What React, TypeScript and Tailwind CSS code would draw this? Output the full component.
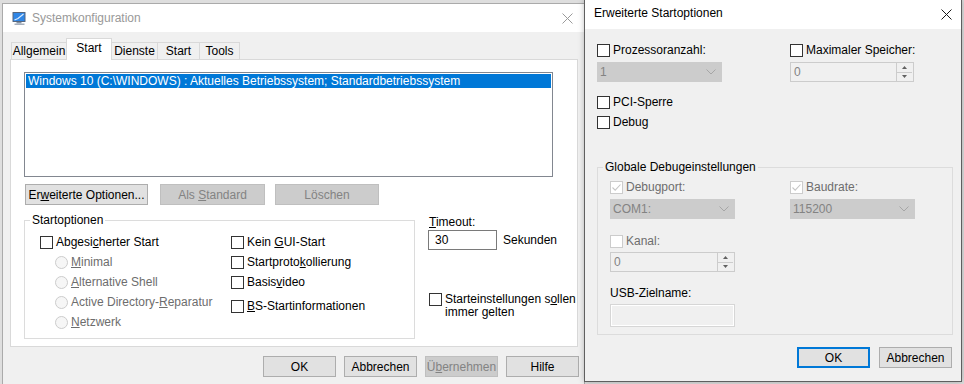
import type { ReactNode } from 'react';

function Box({ checked = false, disabled = false }: { checked?: boolean; disabled?: boolean }) {
  return (
    <span
      className={`w-[13px] h-[13px] shrink-0 border flex items-center justify-center ${
        disabled ? 'border-[#cccccc] bg-white' : 'border-[#333333] bg-white'
      }`}
    >
      {checked && (
        <svg width="11" height="11" viewBox="0 0 11 11">
          <path d="M1.5 5.5 L4.2 8.2 L9.5 2.5" fill="none" stroke="#c6c6c6" strokeWidth="1.1" />
        </svg>
      )}
    </span>
  );
}

function Check({ children, checked = false, disabled = false }: { children: ReactNode; checked?: boolean; disabled?: boolean }) {
  return (
    <div className="flex items-center h-[20px]">
      <Box checked={checked} disabled={disabled} />
      <span className={`ml-[3px] whitespace-nowrap ${disabled ? 'text-[#6d6d6d]' : 'text-black'}`}>{children}</span>
    </div>
  );
}

function Radio({ children }: { children: ReactNode }) {
  return (
    <div className="flex items-center h-[20px] pl-[15px]">
      <span className="w-[13px] h-[13px] shrink-0 rounded-full border border-[#cccccc] bg-[#f6f6f6]" />
      <span className="ml-[3px] whitespace-nowrap text-[#6d6d6d]">{children}</span>
    </div>
  );
}

function Btn({ children, className = '', disabled = false, primary = false }: { children: ReactNode; className?: string; disabled?: boolean; primary?: boolean }) {
  const look = disabled
    ? 'bg-[#cccccc] border border-[#bfbfbf] text-[#838383]'
    : primary
    ? 'bg-[#e1e1e1] border-2 border-[#0078d7] text-black'
    : 'bg-[#e1e1e1] border border-[#adadad] text-black';
  return <div className={`h-[21px] flex items-center justify-center shrink-0 ${look} ${className}`}>{children}</div>;
}

function Combo({ value }: { value: string }) {
  return (
    <div className="w-[125px] h-[20px] bg-[#cccccc] border border-[#cccccc] flex items-center pl-[2px] pr-[5px] text-[#838383]">
      <span>{value}</span>
      <svg className="ml-auto" width="10" height="6" viewBox="0 0 10 6">
        <path d="M0.5 0.5 L5 5 L9.5 0.5" fill="none" stroke="#a6a6a6" strokeWidth="1" />
      </svg>
    </div>
  );
}

function Spin({ value, w = 'w-[125px]' }: { value: string; w?: string }) {
  return (
    <div className={`${w} h-[20px] bg-[#f0f0f0] border border-[#cccccc] flex items-stretch text-[#838383]`}>
      <span className="flex-1 flex items-center pl-[3px]">{value}</span>
      <div className="w-[16px] flex flex-col border-l border-[#cccccc] mr-[1px]">
        <div className="flex-1 flex items-center justify-center border-b border-[#cccccc]">
          <svg width="5" height="3" viewBox="0 0 5 3">
            <path d="M0 3 L2.5 0 L5 3 Z" fill="#606060" />
          </svg>
        </div>
        <div className="flex-1 flex items-center justify-center">
          <svg width="5" height="3" viewBox="0 0 5 3">
            <path d="M0 0 L2.5 3 L5 0 Z" fill="#606060" />
          </svg>
        </div>
      </div>
    </div>
  );
}

function CloseX({ color }: { color: string }) {
  return (
    <svg width="11" height="11" viewBox="0 0 11 11">
      <path d="M0.5 0.5 L10.5 10.5 M10.5 0.5 L0.5 10.5" stroke={color} strokeWidth="1" />
    </svg>
  );
}

function MsIcon() {
  return (
    <svg width="15" height="15" viewBox="0 0 15 15">
      <rect x="0.5" y="1" width="13" height="10" rx="0.5" fill="#56667e" />
      <rect x="1.5" y="2" width="11" height="8" fill="#2f86e6" />
      <path d="M2.5 9 L6 7.5 L11.5 3" stroke="#d9ecff" strokeWidth="1.2" fill="none" />
      <rect x="4.5" y="11" width="5" height="1.5" fill="#8592a3" />
      <rect x="2.5" y="12.5" width="10" height="1.5" fill="#a5afbd" />
    </svg>
  );
}

const tabs = [
  { label: 'Allgemein', w: 'w-[56px]', active: false },
  { label: 'Start', w: 'w-[46px]', active: true },
  { label: 'Dienste', w: 'w-[47px]', active: false },
  { label: 'Start', w: 'w-[43px]', active: false },
  { label: 'Tools', w: 'w-[41px]', active: false },
];

export default function App() {
  return (
    <div className="relative w-[964px] h-[384px] overflow-hidden bg-[#dedede] font-['Liberation_Sans',Arial,sans-serif] text-[12px] leading-[14px] text-black">
      {/* Systemkonfiguration */}
      <div className="absolute left-[2px] top-[3px] w-[583px] h-[395px] border border-[#aaaaaa] bg-[#f0f0f0] flex flex-col">
        <div className="h-[28px] shrink-0 bg-white flex items-center">
          <div className="ml-[9px]">
            <MsIcon />
          </div>
          <span className="ml-[5px] text-[#999999]">Systemkonfiguration</span>
          <div className="ml-auto mr-[11px]">
            <CloseX color="#9a9a9a" />
          </div>
        </div>

        {/* tabs */}
        <div className="relative z-10 h-[28px] -mb-[1px] flex items-end pl-[8px]">
          {tabs.map((t, i) => (
            <div
              key={i}
              className={`${t.w} ${i > 0 ? '-ml-[1px]' : ''} flex items-center justify-center border-[#d9d9d9] ${
                t.active
                  ? 'relative z-10 h-[22px] bg-white border-x border-t pb-[3px]'
                  : 'h-[18px] bg-[#f0f0f0] border'
              }`}
            >
              {t.label}
            </div>
          ))}
        </div>

        <div className="ml-[7px] w-[568px] h-[288px] shrink-0 bg-white border border-[#d9d9d9] pt-[12px] pl-[13px]">
          <div className="w-[529px] h-[105px] border border-[#828790] bg-white p-[1px]">
            <div className="h-[14px] bg-[#0078d7] text-white pl-[2px] whitespace-nowrap">
              Windows 10 (C:\WINDOWS) : Aktuelles Betriebssystem; Standardbetriebssystem
            </div>
          </div>

          <div className="flex mt-[7px] ml-[1px]">
            <Btn className="w-[123px]">
              <span>
                Er<u>w</u>eiterte Optionen...
              </span>
            </Btn>
            <Btn className="w-[105px] ml-[12px]" disabled>
              <span>
                Als <u>S</u>tandard
              </span>
            </Btn>
            <Btn className="w-[104px] ml-[10px]" disabled>
              Löschen
            </Btn>
          </div>

          <div className="flex mt-[8px]">
            <fieldset className="w-[391px] border border-[#dcdcdc] pl-[15px] pt-[5px] pb-[6px] min-w-0">
              <legend className="-ml-[10px] px-[2px] leading-[14px]">Startoptionen</legend>
              <div className="grid grid-cols-[191px_1fr]">
                <div className="flex flex-col">
                  <Check>
                    Abgesi<u>c</u>herter Start
                  </Check>
                  <Radio>
                    <u>M</u>inimal
                  </Radio>
                  <Radio>
                    <u>A</u>lternative Shell
                  </Radio>
                  <Radio>
                    Active Directory-<u>R</u>eparatur
                  </Radio>
                  <Radio>
                    <u>N</u>etzwerk
                  </Radio>
                </div>
                <div className="flex flex-col">
                  <Check>
                    Kein <u>G</u>UI-Start
                  </Check>
                  <Check>
                    Startproto<u>k</u>ollierung
                  </Check>
                  <Check>
                    Basis<u>v</u>ideo
                  </Check>
                  <div className="mt-[4px]">
                    <Check>
                      <u>B</u>S-Startinformationen
                    </Check>
                  </div>
                </div>
              </div>
            </fieldset>

            <div className="ml-[13px] pt-[2px] flex flex-col">
              <div className="pl-[1px]">
                <u>T</u>imeout:
              </div>
              <div className="flex items-center mt-[1px]">
                <div className="w-[69px] h-[20px] border border-[#7a7a7a] bg-white flex items-center pl-[6px]">30</div>
                <span className="ml-[6px]">Sekunden</span>
              </div>
              <div className="flex items-start mt-[43px] pl-[1px]">
                <Box />
                <span className="ml-[3px] leading-[13px]">
                  Starteinstellungen s<u>o</u>llen
                  <br />
                  immer gelten
                </span>
              </div>
            </div>
          </div>
        </div>

        <div className="flex justify-end gap-[8px] pr-[5px] mt-[9px]">
          <Btn className="w-[73px]">OK</Btn>
          <Btn className="w-[73px]">Abbrechen</Btn>
          <Btn className="w-[73px]" disabled>
            <span>
              Ü<u>b</u>ernehmen
            </span>
          </Btn>
          <Btn className="w-[73px]">Hilfe</Btn>
        </div>
      </div>

      {/* Erweiterte Startoptionen */}
      <div className="absolute left-[584px] top-[-1px] w-[378px] h-[383px] border border-[#5f5f5f] bg-[#f0f0f0] flex flex-col shadow-[0_0_6px_rgba(0,0,0,0.25)]">
        <div className="h-[29px] shrink-0 bg-white flex items-center pl-[9px] pb-[3px]">
          <span>Erweiterte Startoptionen</span>
          <div className="ml-auto mr-[9px] mt-[2px]">
            <CloseX color="#1a1a1a" />
          </div>
        </div>

        <div className="flex-1 flex flex-col pl-[12px] pt-[11px]">
          <div className="grid grid-cols-[193px_1fr]">
            <div className="flex flex-col">
              <Check>Prozessoranzahl:</Check>
              <div className="mt-[2px]">
                <Combo value="1" />
              </div>
            </div>
            <div className="flex flex-col">
              <Check>Maximaler Speicher:</Check>
              <div className="mt-[2px]">
                <Spin value="0" w="w-[124px]" />
              </div>
            </div>
          </div>

          <div className="mt-[10px]">
            <Check>PCI-Sperre</Check>
            <Check>Debug</Check>
          </div>

          <fieldset className="mt-[28px] w-[356px] border border-[#dcdcdc] pl-[12px] pt-[3px] pb-[7px] min-w-0">
            <legend className="-ml-[7px] px-[2px] leading-[14px]">Globale Debugeinstellungen</legend>
            <div className="grid grid-cols-[180px_1fr]">
              <div className="flex flex-col">
                <Check checked disabled>
                  Debugport:
                </Check>
                <div className="mt-[2px]">
                  <Combo value="COM1:" />
                </div>
              </div>
              <div className="flex flex-col">
                <Check checked disabled>
                  Baudrate:
                </Check>
                <div className="mt-[2px]">
                  <Combo value="115200" />
                </div>
              </div>
            </div>
            <div className="mt-[12px]">
              <Check disabled>Kanal:</Check>
            </div>
            <div className="mt-[1px]">
              <Spin value="0" />
            </div>
            <div className="mt-[14px] leading-[14px]">USB-Zielname:</div>
            <div className="mt-[4px] w-[125px] h-[23px] border border-[#d6d6d6] bg-[#f0f0f0] shadow-[inset_0_0_0_1px_#ffffff]" />
          </fieldset>

          <div className="flex justify-end gap-[9px] pr-[9px] mt-[12px]">
            <Btn className="w-[73px]" primary>
              OK
            </Btn>
            <Btn className="w-[73px]">Abbrechen</Btn>
          </div>
        </div>
      </div>
    </div>
  );
}
